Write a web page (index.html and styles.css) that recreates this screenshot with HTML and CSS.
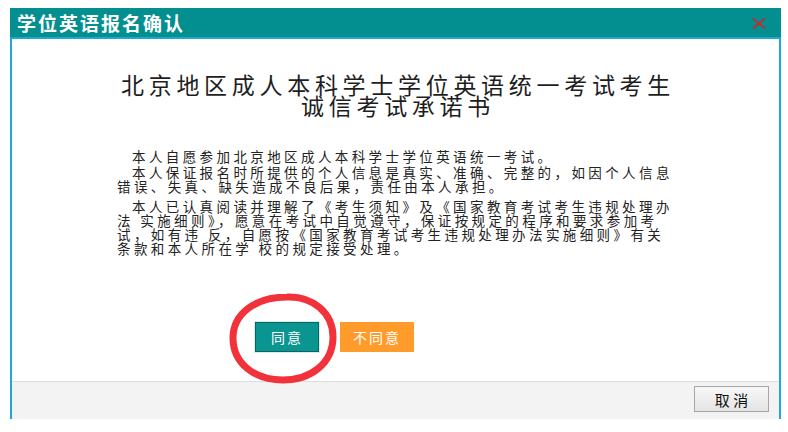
FILE: index.html
```html
<!DOCTYPE html>
<html lang="zh-CN">
<head>
<meta charset="utf-8">
<title>学位英语报名确认</title>
<link rel="stylesheet" href="styles.css">
</head>
<body>
<div class="page">
  <div class="dialog">
    <div class="titlebar">
      <span class="title">学位英语报名确认</span>
      <svg class="close" width="14" height="11" viewBox="0 0 14 11" aria-label="关闭">
        <path d="M1 0.5 L13 10.5 M13 0.5 L1 10.5" stroke="#c8282e" stroke-width="1.8" fill="none"/>
      </svg>
    </div>
    <div class="frame">
      <div class="content">
        <h1 class="heading">北京地区成人本科学士学位英语统一考试考生<br>诚信考试承诺书</h1>
        <div class="pledge">
          <p class="p1 indent">本人自愿参加北京地区成人本科学士学位英语统一考试。</p>
          <p class="p2"><span class="indent">本人保证报名时所提供的个人信息是真实、准确、完整的，如因个人信息</span><br>错误、失真、缺失造成不良后果，责任由本人承担。</p>
          <p class="p3"><span class="indent">本人已认真阅读并理解了《考生须知》及《国家教育考试考生违规处理办</span><br>法 实施细则》，愿意在考试中自觉遵守，保证按规定的程序和要求参加考<br>试，如有违 反，自愿按《国家教育考试考生违规处理办法实施细则》有关<br>条款和本人所在学 校的规定接受处理。</p>
        </div>
        <div class="actions">
          <button class="btn agree">同意</button>
          <button class="btn disagree">不同意</button>
          <svg class="ring" width="112" height="94" viewBox="0 0 112 94">
            <path d="M60 6 C86 5 106 22 106 46 C106 72 84 89 56 89 C27 89 6 72 6 47 C6 23 28 6 60 6 Z" stroke="#f2323a" stroke-width="7" fill="none"/>
          </svg>
        </div>
      </div>
      <div class="footer">
        <button class="cancel">取 消</button>
      </div>
    </div>
  </div>
</div>
</body>
</html>
```

FILE: styles.css
```css
html, body {
  margin: 0;
  padding: 0;
  background: #ffffff;
}
body {
  font-family: "Noto Sans CJK SC", "Noto Sans", sans-serif;
  color: #222;
}
.page {
  padding: 8px 0 0 10px;
}
.dialog {
  width: 771px;
}
.titlebar {
  height: 29px;
  background: #038f8f;
  display: flex;
  align-items: center;
  justify-content: space-between;
  padding: 0 15px 0 7px;
}
.title {
  color: #fff;
  font-size: 19px;
  font-weight: 700;
  letter-spacing: 2px;
  line-height: 29px;
}
.close {
  display: block;
  margin-top: 1px;
}
.frame {
  border-left: 2px solid #1ea8d8;
  border-right: 2px solid #1ea8d8;
  border-top: 2px solid #1ea8d8;
}
.content {
  height: 342px;
  box-sizing: border-box;
  padding-top: 35px;
}
.heading {
  margin: 0;
  font-size: 23px;
  font-weight: 400;
  line-height: 21px;
  letter-spacing: 4.7px;
  text-align: center;
  color: #1e1e1e;
  padding-left: 5px;
}
.pledge {
  margin: 33px 0 0 105px;
  font-size: 13.5px;
  line-height: 14px;
  letter-spacing: 3.4px;
  white-space: nowrap;
  color: #222;
}
.pledge p {
  margin: 0;
}
.pledge .indent {
  padding-left: 15px;
}
.pledge .p1 {
  margin-bottom: 2px;
}
.pledge .p2 {
  margin-bottom: 6px;
}
.actions {
  position: relative;
  display: flex;
  gap: 21px;
  margin: 67px 0 0 243px;
}
.btn {
  height: 30px;
  border: none;
  padding: 0;
  font-family: inherit;
  font-size: 14px;
  letter-spacing: 2px;
  color: #fff;
}
.agree {
  width: 64px;
  background: #0b9590;
  border: 1px solid #0a6663;
  box-shadow: 0 0 0 1px #d8eeee;
}
.disagree {
  width: 74px;
  background: #ff9b2b;
}
.ring {
  position: absolute;
  left: -28px;
  top: -31px;
  pointer-events: none;
}
.footer {
  height: 33px;
  background: #f3f3f3;
  border-top: 1px solid #dcdde2;
  display: flex;
  justify-content: flex-end;
  align-items: flex-start;
  padding: 4px 10px 0 0;
  box-sizing: content-box;
}
.cancel {
  width: 75px;
  height: 26px;
  border: 1px solid #a6a6a6;
  background: linear-gradient(#f7f7f7, #e4e4e4);
  font-family: inherit;
  font-size: 15px;
  color: #111;
  padding: 0;
}
```
